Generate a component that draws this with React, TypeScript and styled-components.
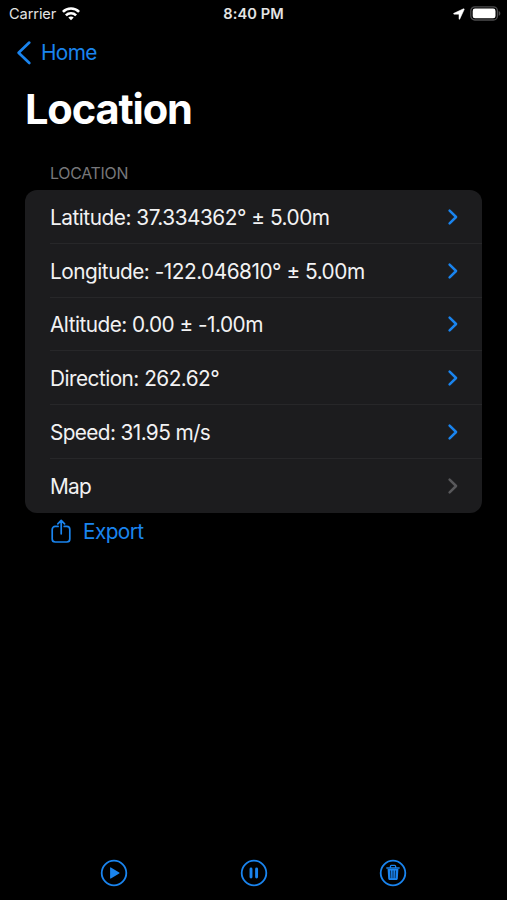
import React from "react";
import styled, { createGlobalStyle } from "styled-components";

const BLUE = "#1a84ee";

const GlobalStyle = createGlobalStyle`
  html, body { margin: 0; background: #000; }
  * { box-sizing: border-box; }
`;

const Screen = styled.div`
  width: 507px;
  height: 900px;
  display: flex;
  flex-direction: column;
  overflow: hidden;
  background: #000;
  color: #f2f2f3;
  font-family: Inter, "Liberation Sans", sans-serif;
  font-size: 20.8px;
  white-space: nowrap;
`;

const StatusBar = styled.header`
  display: grid;
  grid-template-columns: 1fr auto 1fr;
  align-items: center;
  height: 27px;
  padding: 0 6px 0 9px;
  font-size: 14.6px;
  color: #e4e4e4;
`;

const Carrier = styled.div`
  display: flex;
  align-items: center;
  gap: 6px;
`;

const CarrierName = styled.span`
  width: 47px;
  letter-spacing: -0.1px;
`;

const Time = styled.span`
  padding-right: 3px;
  font-weight: 600;
  letter-spacing: 0.1px;
`;

const Indicators = styled.div`
  display: flex;
  justify-content: flex-end;
  align-items: center;
  gap: 5px;
`;

const BackLink = styled.a`
  display: flex;
  align-items: center;
  gap: 9px;
  height: 51px;
  padding-left: 16px;
  color: ${BLUE};
  letter-spacing: -0.6px;
`;

const Title = styled.h1`
  margin: 0;
  height: 62px;
  padding-left: 25px;
  font-size: 41.6px;
  line-height: 62px;
  font-weight: 700;
  color: #fff;
  letter-spacing: -1.15px;
`;

const SectionTitle = styled.h2`
  margin: 0;
  height: 50px;
  padding: 24px 0 0 50px;
  font-size: 15.9px;
  line-height: 20px;
  font-weight: 400;
  color: #77777a;
  letter-spacing: -0.25px;
`;

const Card = styled.ul`
  list-style: none;
  margin: 0 25px;
  padding: 0 0 0 25px;
  border-radius: 12px;
  background: #1c1c1e;
`;

const Row = styled.li`
  display: flex;
  align-items: center;
  justify-content: space-between;
  height: 53.75px;
  padding: 1px 23px 0 0;
  border-bottom: 1px solid #272729;
  &:last-child { border-bottom-color: transparent; }
`;

const RowLabel = styled.span<{ $tracking: number }>`
  padding-top: 1px;
  letter-spacing: ${(p) => p.$tracking}px;
`;

const ExportButton = styled.a`
  display: flex;
  align-items: center;
  gap: 11px;
  height: 38px;
  padding-left: 51px;
  color: ${BLUE};
  letter-spacing: -0.6px;
`;

const Toolbar = styled.footer`
  display: flex;
  justify-content: space-between;
  margin-top: auto;
  padding: 0 100px 13px;
`;

const rows = [
  { label: "Latitude: 37.334362° ± 5.00m", tracking: -0.48 },
  { label: "Longitude: -122.046810° ± 5.00m", tracking: -0.49 },
  { label: "Altitude: 0.00 ± -1.00m", tracking: -0.53 },
  { label: "Direction: 262.62°", tracking: -0.53 },
  { label: "Speed: 31.95 m/s", tracking: -0.62 },
  { label: "Map", tracking: -0.7, muted: true },
];

const WifiIcon = () => (
  <svg width="18" height="14" viewBox="0 0 18 14" fill="none" stroke="#fff" strokeWidth="2.6">
    <path d="M.9 4.9C5.3.4 12.7.4 17.1 4.9" />
    <path d="M3.9 8.3c2.8-2.8 7.4-2.8 10.2 0" />
    <path d="M9 13.3 6.3 10.5c1.5-1.5 3.9-1.5 5.4 0Z" fill="#fff" stroke="none" />
  </svg>
);

const LocationArrow = () => (
  <svg width="12" height="12" viewBox="0 0 12 12" fill="#fff" stroke="#fff" strokeWidth=".5">
    <path d="M.8 5.3 10.5.8c.5-.2.9.2.7.7L6.8 11c-.2.5-.8.4-.8-.1V6.2H1.1c-.6 0-.8-.6-.3-.9Z" />
  </svg>
);

const BatteryIcon = () => (
  <svg width="31" height="15" viewBox="0 0 31 15">
    <rect x=".8" y=".8" width="26.6" height="13.2" rx="4" fill="none" stroke="#4c4c4e" strokeWidth="1.3" />
    <rect x="2.7" y="2.6" width="22.8" height="9.6" rx="2.3" fill="#fff" />
    <path d="M28.7 5c2.2.8 2.2 4 0 4.8Z" fill="#4c4c4e" />
  </svg>
);

const BackIcon = () => (
  <svg width="16" height="26" viewBox="0 0 16 26" fill="none" stroke={BLUE} strokeWidth="2.7" strokeLinecap="round" strokeLinejoin="round">
    <path d="M13.3 2.6 2.6 12.7 13.3 23" />
  </svg>
);

const Chevron = ({ color }: { color: string }) => (
  <svg width="12" height="18" viewBox="0 0 12 18" fill="none" stroke={color} strokeWidth="2.5" strokeLinecap="round" strokeLinejoin="round">
    <path d="m2.6 2.7 6.5 6.3-6.5 6.3" />
  </svg>
);

const ShareIcon = () => (
  <svg width="21" height="26" viewBox="0 0 21 26" fill="none" stroke={BLUE} strokeWidth="1.7" strokeLinecap="round" strokeLinejoin="round">
    <path d="M7.1 7.4H4.2a3 3 0 0 0-3 3V20a3 3 0 0 0 3 3h11.6a3 3 0 0 0 3-3v-9.6a3 3 0 0 0-3-3h-2.6M10.2 14.8V1.7M6.8 4.8l3.4-3.4 3.4 3.4" />
  </svg>
);

const CircleIcon = ({ children }: { children: React.ReactNode }) => (
  <svg width="28" height="28" viewBox="0 0 28 28" fill="none" stroke={BLUE}>
    <circle cx="14" cy="14" r="12.3" strokeWidth="1.8" />
    {children}
  </svg>
);

export default function App() {
  return (
    <>
      <GlobalStyle />
      <Screen>
        <StatusBar>
          <Carrier>
            <CarrierName>Carrier</CarrierName>
            <WifiIcon />
          </Carrier>
          <Time>8:40 PM</Time>
          <Indicators>
            <LocationArrow />
            <BatteryIcon />
          </Indicators>
        </StatusBar>
        <BackLink>
          <BackIcon />
          Home
        </BackLink>
        <Title>Location</Title>
        <SectionTitle>LOCATION</SectionTitle>
        <Card>
          {rows.map((row) => (
            <Row key={row.label}>
              <RowLabel $tracking={row.tracking}>{row.label}</RowLabel>
              <Chevron color={row.muted ? "#58585b" : BLUE} />
            </Row>
          ))}
        </Card>
        <ExportButton>
          <ShareIcon />
          Export
        </ExportButton>
        <Toolbar>
          <CircleIcon>
            <path d="M10.1 8.9v10.2c0 .5.4.7.8.5l8.3-5c.5-.3.5-.8 0-1.1l-8.3-5.1c-.4-.2-.8 0-.8.5Z" fill={BLUE} stroke="none" />
          </CircleIcon>
          <CircleIcon>
            <path d="M11 10v8M16.6 10v8" strokeWidth="2.9" strokeLinecap="round" />
          </CircleIcon>
          <CircleIcon>
            <path d="M7.8 9h12.4M11.4 8.7V7.3c0-.5.4-.9.9-.9h3.4c.5 0 .9.4.9.9v1.4" strokeWidth="1.3" strokeLinecap="round" />
            <path d="M8.6 10h10.8l-.6 9.6c0 .9-.6 1.5-1.4 1.5h-6.8c-.8 0-1.4-.6-1.4-1.5Z" fill={BLUE} stroke="none" />
            <path d="m11.5 11.5.3 7.7M14 11.5v7.7M16.5 11.5l-.3 7.7" stroke="#041a30" strokeWidth=".8" />
          </CircleIcon>
        </Toolbar>
      </Screen>
    </>
  );
}
